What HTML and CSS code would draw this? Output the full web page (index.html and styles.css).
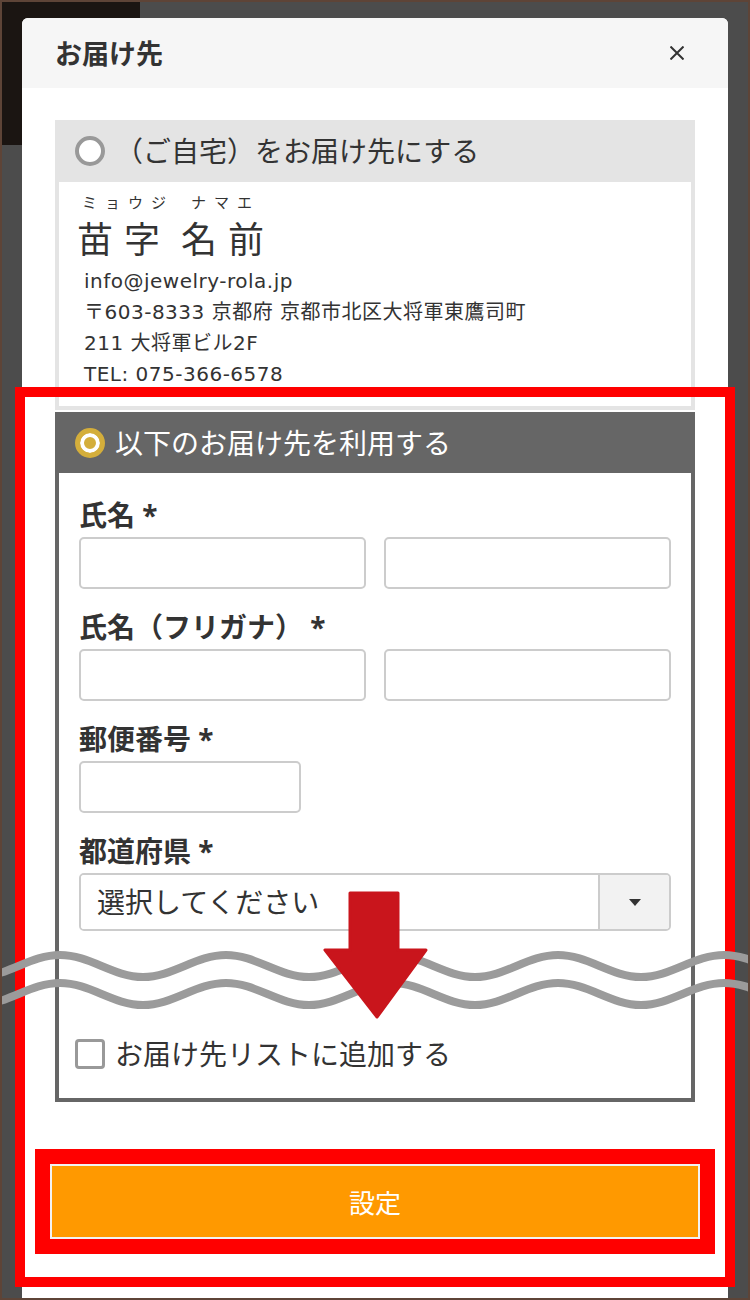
FILE: index.html
```html
<!DOCTYPE html>
<html lang="ja">

<head>
    <meta charset="UTF-8">
    <meta name="viewport" content="width=device-width, initial-scale=1.0">
    <title>お届け先</title>
    <link rel="stylesheet" href="styles.css">
</head>

<body>
    <div class="page">
        <div class="behind"></div>

        <div class="modal">
            <div class="modal-head">
                <h2>お届け先</h2>
                <button class="close" type="button" aria-label="閉じる">
                    <svg width="14" height="14" viewBox="0 0 14 14">
                        <path d="M0.5 0.5L13.5 13.5M13.5 0.5L0.5 13.5" stroke="#333" stroke-width="2" fill="none" />
                    </svg>
                </button>
            </div>

            <div class="modal-body">
                <div class="box">
                    <label class="box-head">
                        <input type="radio" name="dest" class="radio">
                        <span>（ご自宅）をお届け先にする</span>
                    </label>
                    <div class="home-info">
                        <div class="name-row">
                            <div class="name-part">
                                <span class="kana">ミョウジ</span>
                                <span class="kanji">苗字</span>
                            </div>
                            <div class="name-part">
                                <span class="kana kana-2">ナマエ</span>
                                <span class="kanji">名前</span>
                            </div>
                        </div>
                        <p class="first">info@jewelry-rola.jp</p>
                        <p>〒603-8333 京都府 京都市北区大将軍東鷹司町</p>
                        <p>211 大将軍ビル2F</p>
                        <p>TEL: 075-366-6578</p>
                    </div>
                </div>

                <div class="box box-other">
                    <label class="box-head dark">
                        <input type="radio" name="dest" class="radio" checked>
                        <span>以下のお届け先を利用する</span>
                    </label>
                    <div class="form">
                        <div class="field">
                            <p class="field-label">氏名 *</p>
                            <div class="input-row">
                                <input type="text" class="txt">
                                <input type="text" class="txt">
                            </div>
                        </div>
                        <div class="field">
                            <p class="field-label">氏名（フリガナ） *</p>
                            <div class="input-row">
                                <input type="text" class="txt">
                                <input type="text" class="txt">
                            </div>
                        </div>
                        <div class="field">
                            <p class="field-label">郵便番号 *</p>
                            <input type="text" class="txt zip">
                        </div>
                        <div class="field">
                            <p class="field-label">都道府県 *</p>
                            <div class="select">
                                <select>
                                    <option>選択してください</option>
                                </select>
                                <span class="caret-box"><span class="caret"></span></span>
                            </div>
                        </div>
                        <label class="check">
                            <input type="checkbox" class="chk">
                            <span>お届け先リストに追加する</span>
                        </label>
                    </div>
                </div>

                <button class="submit" type="button">設定</button>
            </div>
        </div>

        <!-- annotations on top of the screenshot -->
        <div class="mark"></div>
        <svg class="cut" width="750" height="150" viewBox="0 880 750 150">
            <path id="wave" d="M-23 977 C7 977 30 955 60 955 S113 977 143 977 S196 955 226 955 S279 977 309 977 S362 955 392 955 S445 977 475 977 S528 955 558 955 S611 977 641 977 S694 955 724 955 S777 977 807 977" stroke="#9b9b9b" stroke-width="8" fill="none" />
            <use href="#wave" transform="translate(0 28)" />
            <polygon points="350,893 398,893 398,950 426,950 377,1017 325,950 350,950" fill="#c9151c" stroke="#c9151c" stroke-width="3" stroke-linejoin="round" />
        </svg>
    </div>
</body>

</html>
```

FILE: styles.css
```css
* {
    margin: 0;
    padding: 0;
    box-sizing: border-box;
}

body {
    font-family: "Noto Sans", "Noto Sans CJK JP", sans-serif;
    color: #333;
}

.page {
    position: relative;
    height: 1300px;
    overflow: hidden;
    background-color: #4c4c4c;
    border: 2px solid #5e4437;
    padding: 16px 20px 0;
}

.behind {
    position: absolute;
    top: 0;
    left: 0;
    width: 138px;
    height: 143px;
    background-color: #1b1512;
}

.modal {
    position: relative;
    z-index: 1;
    background-color: #fff;
    border-radius: 6px 6px 0 0;
}

.modal-head {
    display: flex;
    justify-content: space-between;
    align-items: center;
    height: 70px;
    padding: 0 44px 0 33px;
    background-color: #f6f6f6;
    border-radius: 6px 6px 0 0;
}

.modal-head h2 {
    font-size: 27px;
    font-weight: bold;
    line-height: 1;
}

.close {
    display: flex;
    border: none;
    background: none;
}

.modal-body {
    padding: 32px 33px 80px;
}

.box-head {
    display: flex;
    align-items: center;
    gap: 10px;
    height: 62px;
    padding-left: 20px;
    background-color: #e4e4e4;
    font-size: 28px;
    line-height: 1;
}

.box-head.dark {
    height: 61px;
    background-color: #666;
    color: #fff;
}

.radio {
    appearance: none;
    flex-shrink: 0;
    width: 30px;
    height: 30px;
    margin: 0;
    border: 4px solid #999;
    border-radius: 50%;
    background-color: #fff;
}

.radio:checked {
    border: 5px solid #d4ae3b;
    background-color: #d4ae3b;
    box-shadow: inset 0 0 0 4px #fff;
}

.home-info {
    border: 4px solid #e4e4e4;
    border-top: none;
    padding: 11px 20px 16px 25px;
}

.name-row {
    display: flex;
    gap: 7px;
    margin-left: -7px;
}

.name-part {
    display: flex;
    flex-direction: column;
}

.kana {
    font-size: 15px;
    line-height: 18px;
    letter-spacing: 8px;
    padding-left: 5px;
}

.kana-2 {
    padding-left: 10px;
}

.kanji {
    margin-top: 7px;
    font-size: 36px;
    line-height: 44px;
    letter-spacing: 11px;
}

.home-info p {
    font-family: "DejaVu Sans", "Noto Sans CJK JP", sans-serif;
    font-size: 20px;
    line-height: 31px;
    letter-spacing: 0.5px;
}

.home-info .first {
    margin-top: 4px;
}

.box-other {
    margin-top: 2px;
}

.form {
    border: 4px solid #666;
    border-top: none;
    padding: 27px 20px 29px 20px;
}

.field + .field {
    margin-top: 23px;
}

.field-label {
    font-size: 28px;
    font-weight: bold;
    line-height: 30px;
    margin-bottom: 7px;
}

.input-row {
    display: flex;
    gap: 18px;
}

.txt {
    display: block;
    flex: 1;
    min-width: 0;
    height: 52px;
    border: 2px solid #ccc;
    border-radius: 5px;
    background-color: #fff;
}

.txt.zip {
    width: 222px;
}

.select {
    display: flex;
    height: 58px;
    border: 2px solid #ccc;
    border-radius: 5px;
    overflow: hidden;
}

.select select {
    flex: 1;
    appearance: none;
    border: none;
    outline: none;
    background-color: #fff;
    padding-left: 16px;
    font-family: inherit;
    font-size: 28px;
    color: #333;
}

.caret-box {
    display: flex;
    justify-content: center;
    align-items: center;
    width: 71px;
    background-color: #f2f2f2;
    border-left: 2px solid #ccc;
}

.caret {
    width: 0;
    height: 0;
    border-top: 7px solid #333;
    border-left: 6px solid transparent;
    border-right: 6px solid transparent;
}

.check {
    display: flex;
    align-items: center;
    gap: 10px;
    margin: 108px 0 0 -4px;
    font-size: 28px;
    line-height: 30px;
}

.chk {
    appearance: none;
    flex-shrink: 0;
    width: 30px;
    height: 30px;
    margin: 0;
    border: 3px solid #999;
    border-radius: 4px;
    background-color: #fff;
}

.submit {
    display: block;
    width: calc(100% + 10px);
    height: 75px;
    margin: 62px -5px 0;
    border: 2px solid #f2f2f2;
    background-color: #ff9900;
    color: #fff;
    font-family: inherit;
    font-size: 26px;
    box-shadow: 0 0 0 15px #f00;
}

.mark {
    position: absolute;
    z-index: 2;
    left: 13px;
    top: 385px;
    width: 720px;
    height: 900px;
    border: 10px solid #f00;
}

.cut {
    position: absolute;
    z-index: 3;
    left: -2px;
    top: 878px;
}
```
